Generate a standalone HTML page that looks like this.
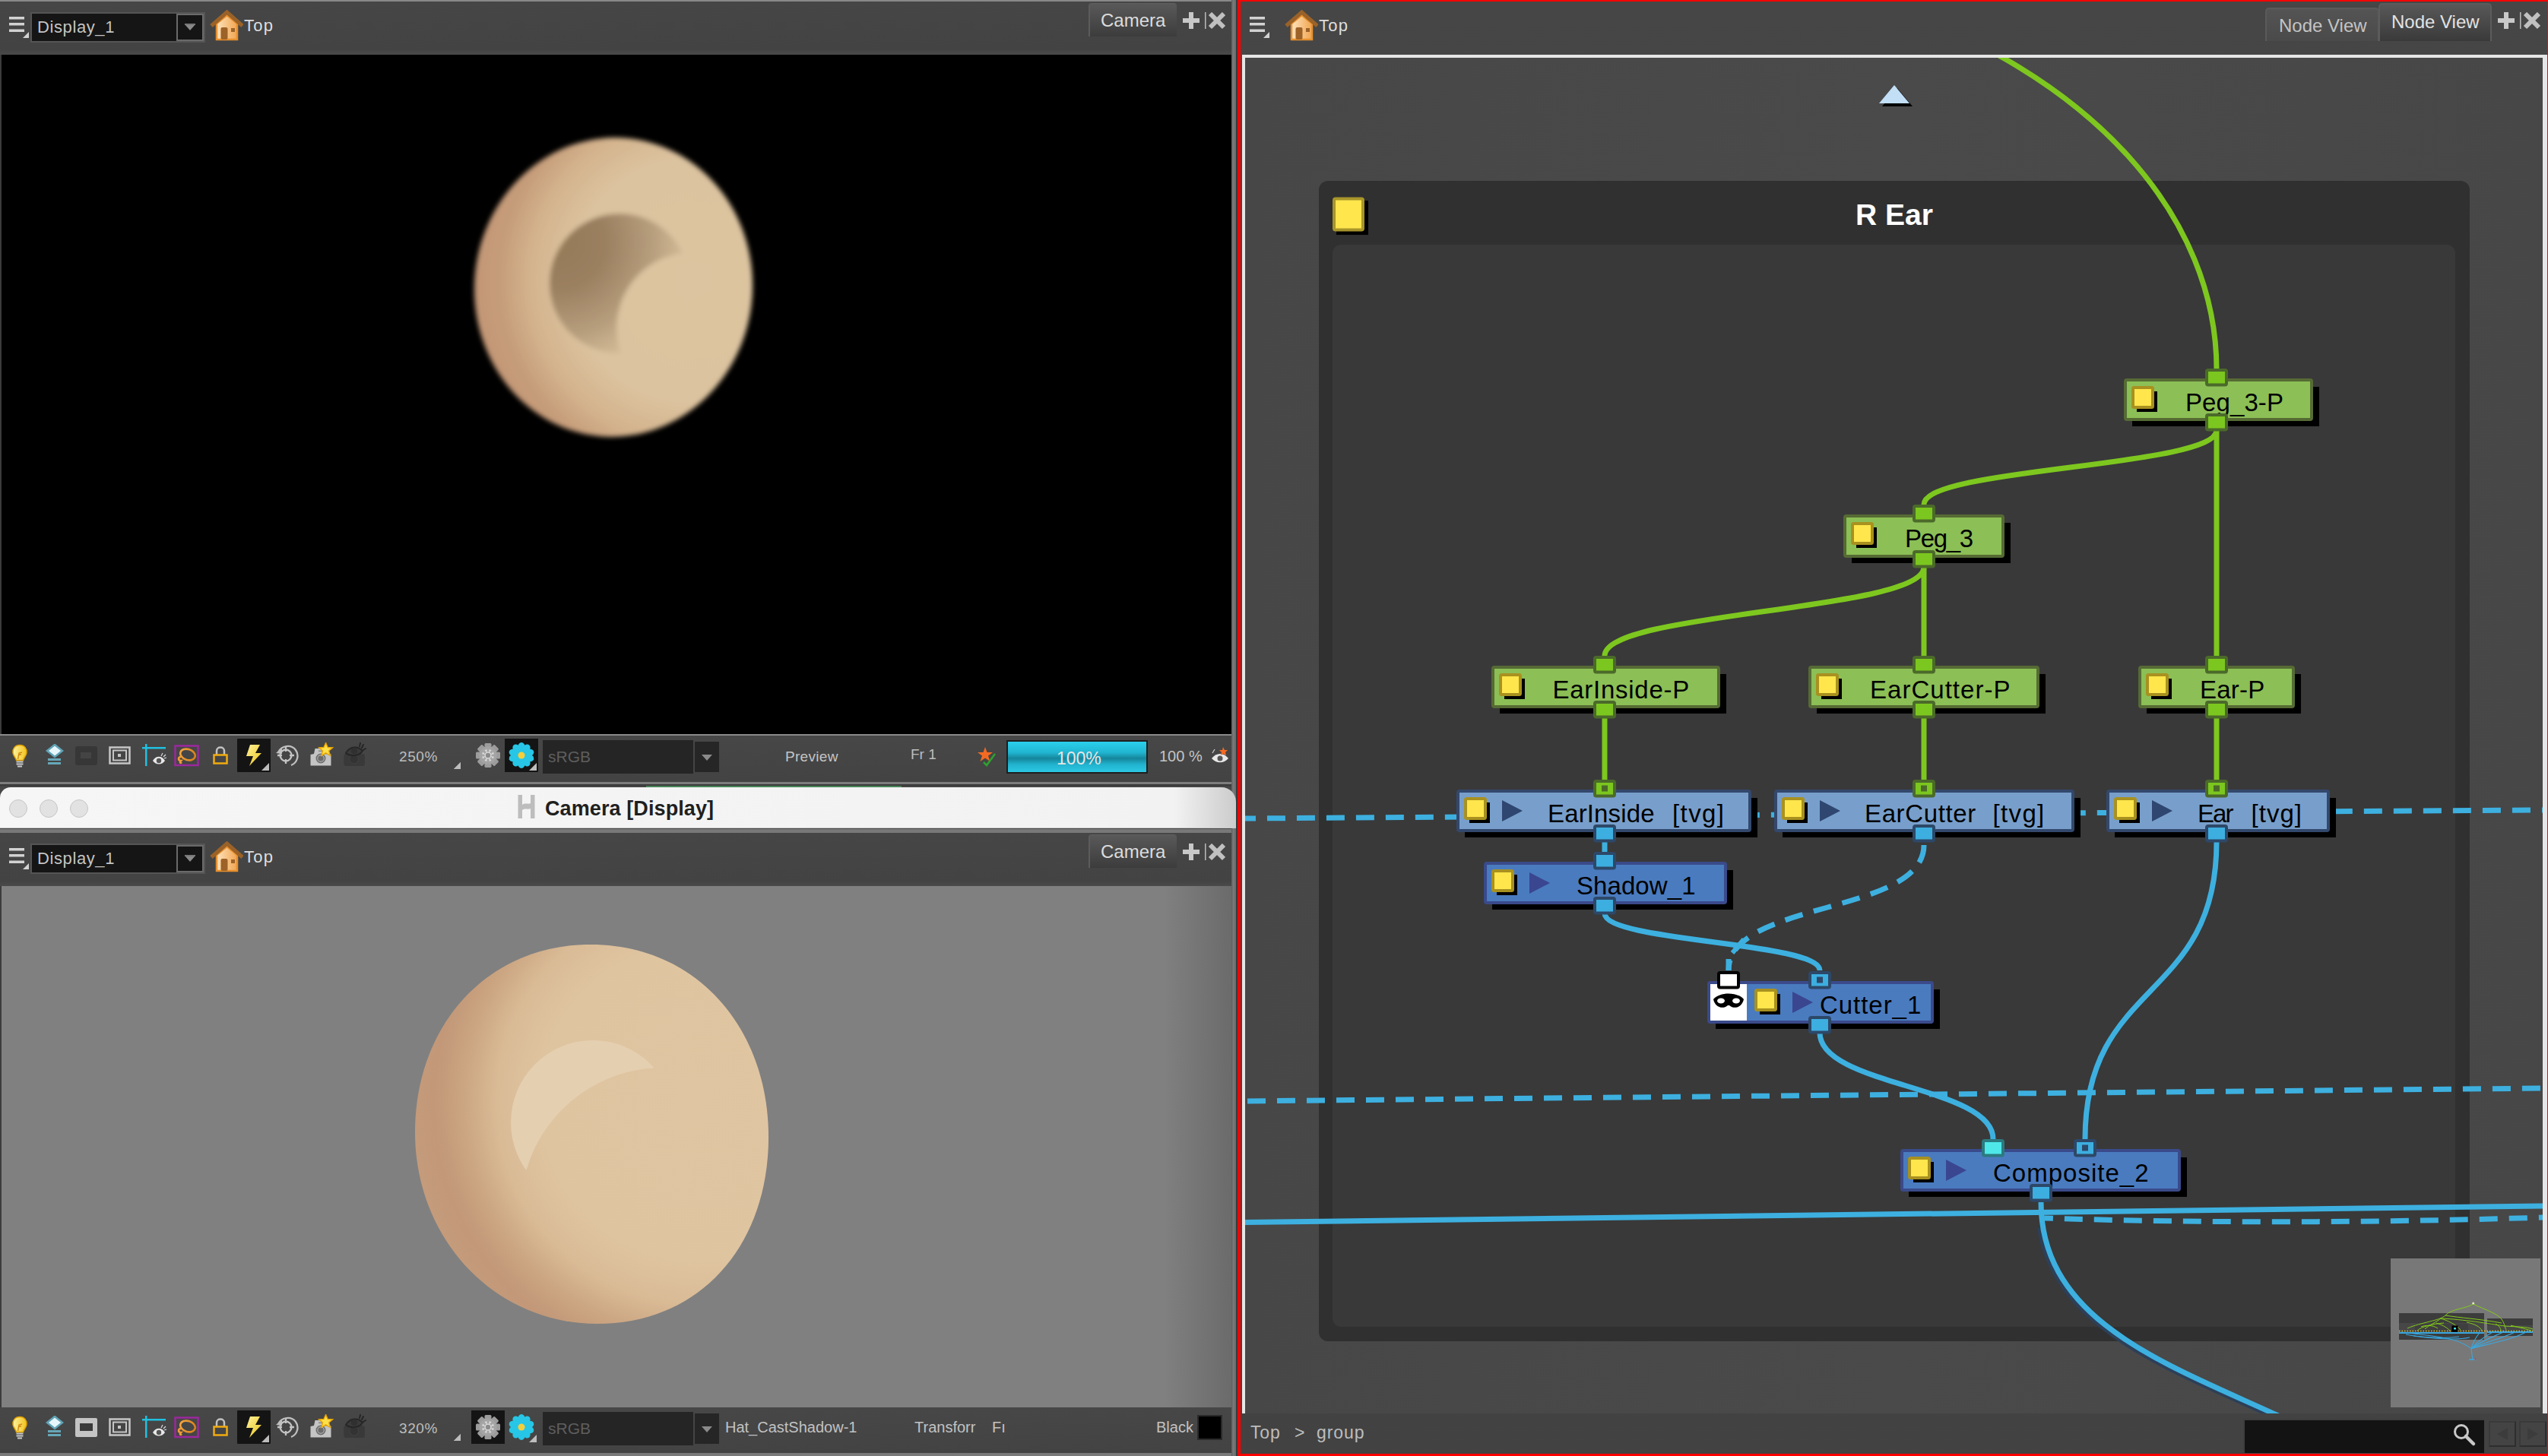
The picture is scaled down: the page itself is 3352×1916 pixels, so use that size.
<!DOCTYPE html>
<html><head><meta charset="utf-8"><title>Harmony</title>
<style>
html,body{margin:0;padding:0;width:3352px;height:1916px;overflow:hidden;background:#474747;font-family:"Liberation Sans",sans-serif;}
.a{position:absolute;}
.tb{background:linear-gradient(#4a4a4a,#454545);}
.t{position:absolute;white-space:nowrap;line-height:1;}
</style></head><body>

<div class="a" style="left:0px;top:0px;width:1620px;height:72px;background:linear-gradient(#464646,#434343 90%,#4a4a4a);border-top:2px solid #888;box-sizing:border-box"></div>
<svg class="a" style="left:12px;top:22px;" width="27" height="29" viewBox="0 0 27 29"><rect x="0" y="0" width="20" height="3.5" fill="#d2d2d2"/><rect x="0" y="8" width="20" height="3.5" fill="#d2d2d2"/><rect x="0" y="16.5" width="20" height="3.5" fill="#d2d2d2"/><path d="M26 20 L26 28 L18 28 Z" fill="#d2d2d2"/></svg>
<div class="a" style="left:40px;top:16px;width:230px;height:40px;background:#151515;border:2px solid #555;box-sizing:border-box"></div>
<div class="a" style="left:232px;top:18px;width:36px;height:36px;background:#151515;border:2px solid #6a6a6a;box-sizing:border-box"></div>
<svg class="a" style="left:243px;top:31px;" width="14" height="10" viewBox="0 0 14 10"><path d="M0 1 L14 1 L7 9 Z" fill="#8a8a8a"/><rect x="0" y="0" width="14" height="2" fill="#777"/></svg>
<div class="t" style="left:49px;top:25px;font-size:22px;color:#c4c4c4;font-weight:normal;letter-spacing:0.6px">Display_1</div>
<svg class="a" style="left:276px;top:13px;" width="44" height="41" viewBox="0 0 44 41"><defs><linearGradient id="hg276_13" x1="0" x2="1"><stop offset="0" stop-color="#fde3bd"/><stop offset="1" stop-color="#f2a550"/></linearGradient></defs>
<path d="M9 18 L9 39 L36 39 L36 18 L22.5 7 Z" fill="url(#hg276_13)" stroke="#e7902e" stroke-width="2.5"/>
<path d="M2 21 L22.5 3 L43 21" fill="none" stroke="#9a6228" stroke-width="5" stroke-linejoin="miter"/>
<rect x="14.5" y="23" width="9" height="16" rx="2" fill="#9c6228"/>
<rect x="28" y="24" width="5" height="5" fill="#9c6228"/></svg>
<div class="t" style="left:321px;top:23px;font-size:22px;color:#dedede;font-weight:normal;letter-spacing:1.2px">Top</div>
<div class="a" style="left:1432px;top:4px;width:116px;height:44px;background:linear-gradient(#595959,#3c3c3c);border-left:2px solid #5c5c5c;border-top:1px solid #5e5e5e;border-radius:4px 4px 0 0;box-sizing:border-box"></div>
<div class="t" style="left:1448px;top:15px;font-size:24px;color:#dcdcdc;font-weight:normal;">Camera</div>
<svg class="a" style="left:1556px;top:16px;" width="56" height="24" viewBox="0 0 56 24"><rect x="0" y="8" width="22" height="6" fill="#c8c8c8"/><rect x="8" y="0" width="6" height="22" fill="#c8c8c8"/>
<rect x="29" y="-1" width="1.5" height="23" fill="#bbbbbb"/>
<path d="M36 2 L54 20 M54 2 L36 20" stroke="#c0c0c0" stroke-width="6"/></svg>
<div class="a" style="left:0px;top:72px;width:2px;height:894px;background:#3c3c3c"></div>
<div class="a" style="left:2px;top:72px;width:1618px;height:894px;background:#000"></div>
<div class="a" style="left:0px;top:966px;width:1620px;height:63px;background:linear-gradient(#474747,#434343);border-top:2px solid #8a8a8a;box-sizing:border-box"></div>
<div class="a" style="left:0px;top:1029px;width:1620px;height:7px;background:linear-gradient(#7d7d7d 0,#7d7d7d 45%,#3a3a3a 45%,#3a3a3a 72%,#444 72%)"></div>
<div class="a" style="left:850px;top:1034px;width:336px;height:2px;background:#4a8458"></div>
<div class="a" style="left:1620px;top:0px;width:6px;height:1916px;background:linear-gradient(90deg,#5e5e5e,#7a7a7a 40%,#6a6a6a)"></div>
<div class="a" style="left:1626px;top:0px;width:2px;height:1916px;background:#3a3a3a"></div>
<div class="a" style="left:0px;top:1036px;width:1626px;height:54px;background:linear-gradient(90deg,#f6f6f6 0,#f2f2f2 95%,#cccccc 100%);border-radius:14px 19px 0 0;border-bottom:1px solid #c9c9c9;box-sizing:border-box"></div>
<div class="a" style="left:12px;top:1052px;width:24px;height:24px;background:#e2e2e2;border:1px solid #c6c6c6;border-radius:50%;box-sizing:border-box"></div>
<div class="a" style="left:52px;top:1052px;width:24px;height:24px;background:#e2e2e2;border:1px solid #c6c6c6;border-radius:50%;box-sizing:border-box"></div>
<div class="a" style="left:92px;top:1052px;width:24px;height:24px;background:#e2e2e2;border:1px solid #c6c6c6;border-radius:50%;box-sizing:border-box"></div>
<svg class="a" style="left:679px;top:1045px;" width="27" height="33" viewBox="0 0 27 33"><path d="M2.5 1 L8 1 L8 14 C12 11 16 14 19 12 L19 1 L24.5 1 L24.5 32 L19 32 L19 19 C15 21 12 18 8 21 L8 32 L2.5 32 Z" fill="#bdbdbd"/></svg>
<div class="t" style="left:717px;top:1051px;font-size:27px;color:#1f1f1f;font-weight:bold;letter-spacing:0.1px">Camera [Display]</div>
<div class="a" style="left:0px;top:1091px;width:1620px;height:5px;background:#787878"></div>
<div class="a" style="left:0px;top:1096px;width:1620px;height:70px;background:linear-gradient(#464646,#434343 90%,#4a4a4a)"></div>
<svg class="a" style="left:12px;top:1116px;" width="27" height="29" viewBox="0 0 27 29"><rect x="0" y="0" width="20" height="3.5" fill="#d2d2d2"/><rect x="0" y="8" width="20" height="3.5" fill="#d2d2d2"/><rect x="0" y="16.5" width="20" height="3.5" fill="#d2d2d2"/><path d="M26 20 L26 28 L18 28 Z" fill="#d2d2d2"/></svg>
<div class="a" style="left:40px;top:1110px;width:230px;height:40px;background:#151515;border:2px solid #555;box-sizing:border-box"></div>
<div class="a" style="left:232px;top:1112px;width:36px;height:36px;background:#151515;border:2px solid #6a6a6a;box-sizing:border-box"></div>
<svg class="a" style="left:243px;top:1125px;" width="14" height="10" viewBox="0 0 14 10"><path d="M0 1 L14 1 L7 9 Z" fill="#8a8a8a"/><rect x="0" y="0" width="14" height="2" fill="#777"/></svg>
<div class="t" style="left:49px;top:1119px;font-size:22px;color:#c4c4c4;font-weight:normal;letter-spacing:0.6px">Display_1</div>
<svg class="a" style="left:276px;top:1107px;" width="44" height="41" viewBox="0 0 44 41"><defs><linearGradient id="hg276_1107" x1="0" x2="1"><stop offset="0" stop-color="#fde3bd"/><stop offset="1" stop-color="#f2a550"/></linearGradient></defs>
<path d="M9 18 L9 39 L36 39 L36 18 L22.5 7 Z" fill="url(#hg276_1107)" stroke="#e7902e" stroke-width="2.5"/>
<path d="M2 21 L22.5 3 L43 21" fill="none" stroke="#9a6228" stroke-width="5" stroke-linejoin="miter"/>
<rect x="14.5" y="23" width="9" height="16" rx="2" fill="#9c6228"/>
<rect x="28" y="24" width="5" height="5" fill="#9c6228"/></svg>
<div class="t" style="left:321px;top:1117px;font-size:22px;color:#dedede;font-weight:normal;letter-spacing:1.2px">Top</div>
<div class="a" style="left:1432px;top:1098px;width:116px;height:44px;background:linear-gradient(#595959,#3c3c3c);border-left:2px solid #5c5c5c;border-top:1px solid #5e5e5e;border-radius:4px 4px 0 0;box-sizing:border-box"></div>
<div class="t" style="left:1448px;top:1109px;font-size:24px;color:#dcdcdc;font-weight:normal;">Camera</div>
<svg class="a" style="left:1556px;top:1110px;" width="56" height="24" viewBox="0 0 56 24"><rect x="0" y="8" width="22" height="6" fill="#c8c8c8"/><rect x="8" y="0" width="6" height="22" fill="#c8c8c8"/>
<rect x="29" y="-1" width="1.5" height="23" fill="#bbbbbb"/>
<path d="M36 2 L54 20 M54 2 L36 20" stroke="#c0c0c0" stroke-width="6"/></svg>
<div class="a" style="left:0px;top:1166px;width:2px;height:686px;background:#3c3c3c"></div>
<div class="a" style="left:2px;top:1166px;width:1618px;height:686px;background:linear-gradient(90deg,#808080 0,#808080 94.5%,#6b6b6b 100%)"></div>
<div class="a" style="left:0px;top:1852px;width:1620px;height:60px;background:linear-gradient(#474747,#434343)"></div>
<div class="a" style="left:0px;top:1912px;width:1620px;height:4px;background:#7a7a7a"></div>
<svg class="a" style="left:15px;top:979px;" width="22" height="34" viewBox="0 0 22 34"><defs><linearGradient id="bulb994" x1="0" x2="1"><stop offset="0" stop-color="#fff3a0"/><stop offset="1" stop-color="#f1c21b"/></linearGradient></defs>
<path d="M11 1.5 C4.5 1.5 1.5 6.5 2 11.5 C2.5 16 6 18 6.5 21.5 L15.5 21.5 C16 18 19.5 16 20 11.5 C20.5 6.5 17.5 1.5 11 1.5 Z" fill="url(#bulb994)" stroke="#e0a000" stroke-width="1.5"/>
<path d="M8.5 20 L10 12 L14 11 M10 14.5 L13 13.5" stroke="#d08a10" stroke-width="1.4" fill="none"/>
<path d="M6.5 23.5 L15.5 23.5 M6.5 26.5 L15.5 26.5 M8 29.5 L14 29.5" stroke="#c9c9c9" stroke-width="2"/></svg>
<svg class="a" style="left:60px;top:979px;" width="24" height="29" viewBox="0 0 24 29"><path d="M12 1 L22 9 L12 17 L2 9 Z" fill="#e6f6fb" stroke="#5fa3b6" stroke-width="2.5"/>
<rect x="3" y="19" width="17" height="3" fill="#66a7b8"/><rect x="3" y="24" width="17" height="3" fill="#66a7b8"/></svg>
<svg class="a" style="left:99px;top:982px;" width="30" height="25" viewBox="0 0 30 25"><rect x="0" y="0" width="29" height="25" rx="3" fill="#373737"/><rect x="7" y="8" width="14" height="8" fill="#444"/></svg>
<svg class="a" style="left:143px;top:982px;" width="30" height="25" viewBox="0 0 30 25"><rect x="1.5" y="1.5" width="26" height="21" fill="none" stroke="#c6c6c6" stroke-width="2.5"/><rect x="6" y="5.5" width="17" height="13" fill="none" stroke="#c6c6c6" stroke-width="2"/><rect x="12" y="10" width="4" height="4" fill="#c6c6c6"/></svg>
<svg class="a" style="left:186px;top:978px;" width="34" height="32" viewBox="0 0 34 32"><rect x="5" y="1" width="2.5" height="29" fill="#20c0e0"/><rect x="1" y="5" width="31" height="2.5" fill="#20c0e0"/>
<path d="M15 23 C19 16 27 16 31 23 C27 29 19 29 15 23 Z" fill="#e8e8e8"/><circle cx="23" cy="23" r="3.2" fill="#555"/>
<path d="M26 17 L28 13 M29 18 L32 15 M30 20 L33 19" stroke="#ddd" stroke-width="1.2"/></svg>
<svg class="a" style="left:229px;top:980px;" width="34" height="29" viewBox="0 0 34 29"><rect x="1.5" y="1.5" width="30" height="25.5" fill="none" stroke="#9c289e" stroke-width="2.5"/>
<defs><linearGradient id="las994" x1="0" x2="1"><stop offset="0" stop-color="#f3a43e"/><stop offset="1" stop-color="#d7801c"/></linearGradient></defs>
<ellipse cx="18" cy="13" rx="10" ry="7" fill="none" stroke="url(#las994)" stroke-width="2.6" transform="rotate(18 18 13)"/>
<path d="M9 16 C5 16 5 21 9 21 C7 23 8 25 10 23" fill="none" stroke="#ef9c36" stroke-width="2.6"/></svg>
<svg class="a" style="left:279px;top:982px;" width="22" height="25" viewBox="0 0 22 25"><path d="M6 11 L6 6 C6 0 16 0 16 6 L16 11" fill="none" stroke="#c2c2c2" stroke-width="2.5"/><rect x="2.5" y="11.5" width="17" height="11" fill="none" stroke="#f0ab10" stroke-width="2.5"/></svg>
<svg class="a" style="left:312px;top:972px;" width="44" height="44" viewBox="0 0 44 44"><rect x="0" y="0" width="44" height="44" rx="1" fill="#141414"/>
<defs><linearGradient id="bolt994" x1="0" x2="1" y1="0" y2="1"><stop offset="0" stop-color="#fff29a"/><stop offset="1" stop-color="#e8c21a"/></linearGradient></defs>
<path d="M17 8 L30 8 L24 19 L32 19 L16 36 L21 23 L12 23 Z" fill="url(#bolt994)"/>
<path d="M42 32 L42 42 L32 42 Z" fill="#bcbcbc"/></svg>
<svg class="a" style="left:361px;top:979px;" width="32" height="30" viewBox="0 0 32 30"><path d="M5 11 C9 2 22 0 28 8 C33 15 30 25 22 28" fill="none" stroke="#bfbfbf" stroke-width="2.3"/>
<path d="M2 12 L10 5 L10 13 Z" fill="#bfbfbf"/>
<circle cx="15" cy="15" r="7.5" fill="none" stroke="#c4c4c4" stroke-width="2.3"/>
<path d="M15 4 L15 10 M15 20 L15 26 M4 15 L10 15 M20 15 L26 15" stroke="#c4c4c4" stroke-width="2.3"/></svg>
<svg class="a" style="left:407px;top:977px;" width="34" height="32" viewBox="0 0 34 32"><path d="M1.5 16 L6 15 L7.5 8 L18 8 L18.5 15 L28.5 15.5 L28.5 30.5 L1.5 30.5 Z" fill="#c4c4c4"/>
<rect x="12" y="10.5" width="6" height="1.6" fill="#8a8a8a"/>
<circle cx="15" cy="21" r="5.6" fill="#c4c4c4" stroke="#6e6e6e" stroke-width="1.8"/><circle cx="15" cy="21" r="3.8" fill="#6b6b6b"/>
<path d="M21.6 0.5 L24.2 6.5 L30.6 6.9 L25.7 11 L27.3 17.3 L21.6 13.9 L15.9 17.3 L17.5 11 L12.6 6.9 L19 6.5 Z" fill="#ffe04a" stroke="#e8a400" stroke-width="1.4"/></svg>
<svg class="a" style="left:451px;top:977px;" width="32" height="33" viewBox="0 0 32 33"><rect x="1.3" y="15" width="27.6" height="16" rx="3" fill="#393939"/>
<circle cx="14.7" cy="22" r="6" fill="#333" stroke="#3e3e3e" stroke-width="1.5"/>
<path d="M4 14 C9 5 20 4 26 11 C22 18 10 19 4 14 Z" fill="#3a3a3a" stroke="#262626" stroke-width="2"/>
<circle cx="15" cy="11" r="4.3" fill="#303030"/>
<path d="M22 5 L23 1 M25 7 L27 3 M27 10 L30 8" stroke="#262626" stroke-width="2" stroke-linecap="round"/></svg>
<div class="t" style="left:525px;top:986px;font-size:19px;color:#bdbdbd;font-weight:normal;letter-spacing:0.6px">250%</div>
<svg class="a" style="left:597px;top:1003px;" width="9" height="9" viewBox="0 0 9 9"><path d="M9 0 L9 9 L0 9 Z" fill="#bdbdbd"/></svg>
<svg class="a" style="left:624px;top:976px;" width="36" height="36" viewBox="0 0 36 36"><g transform="translate(18 18)"><rect x="-4.5" y="-16" width="9" height="9" rx="1.5" fill="#9c9c9c" transform="rotate(0)"/><rect x="-4.5" y="-16" width="9" height="9" rx="1.5" fill="#9c9c9c" transform="rotate(45)"/><rect x="-4.5" y="-16" width="9" height="9" rx="1.5" fill="#9c9c9c" transform="rotate(90)"/><rect x="-4.5" y="-16" width="9" height="9" rx="1.5" fill="#9c9c9c" transform="rotate(135)"/><rect x="-4.5" y="-16" width="9" height="9" rx="1.5" fill="#9c9c9c" transform="rotate(180)"/><rect x="-4.5" y="-16" width="9" height="9" rx="1.5" fill="#9c9c9c" transform="rotate(225)"/><rect x="-4.5" y="-16" width="9" height="9" rx="1.5" fill="#9c9c9c" transform="rotate(270)"/><rect x="-4.5" y="-16" width="9" height="9" rx="1.5" fill="#9c9c9c" transform="rotate(315)"/><circle r="11.5" fill="#a4a4a4"/><circle r="8" fill="#dcdcdc"/><rect x="-1.5" y="-8.5" width="3" height="4" fill="#a4a4a4" transform="rotate(0)"/><rect x="-1.5" y="-8.5" width="3" height="4" fill="#a4a4a4" transform="rotate(45)"/><rect x="-1.5" y="-8.5" width="3" height="4" fill="#a4a4a4" transform="rotate(90)"/><rect x="-1.5" y="-8.5" width="3" height="4" fill="#a4a4a4" transform="rotate(135)"/><rect x="-1.5" y="-8.5" width="3" height="4" fill="#a4a4a4" transform="rotate(180)"/><rect x="-1.5" y="-8.5" width="3" height="4" fill="#a4a4a4" transform="rotate(225)"/><rect x="-1.5" y="-8.5" width="3" height="4" fill="#a4a4a4" transform="rotate(270)"/><rect x="-1.5" y="-8.5" width="3" height="4" fill="#a4a4a4" transform="rotate(315)"/><circle r="3.2" fill="#8c8c8c"/></g></svg>
<div class="a" style="left:664px;top:972px;width:44px;height:44px;background:#141414"></div>
<svg class="a" style="left:668px;top:976px;" width="36" height="36" viewBox="0 0 36 36"><g transform="translate(18 18)"><ellipse cx="0" cy="-10" rx="5" ry="7" fill="#27c6e6" transform="rotate(0)"/><ellipse cx="0" cy="-10" rx="5" ry="7" fill="#27c6e6" transform="rotate(36)"/><ellipse cx="0" cy="-10" rx="5" ry="7" fill="#27c6e6" transform="rotate(72)"/><ellipse cx="0" cy="-10" rx="5" ry="7" fill="#27c6e6" transform="rotate(108)"/><ellipse cx="0" cy="-10" rx="5" ry="7" fill="#27c6e6" transform="rotate(144)"/><ellipse cx="0" cy="-10" rx="5" ry="7" fill="#27c6e6" transform="rotate(180)"/><ellipse cx="0" cy="-10" rx="5" ry="7" fill="#27c6e6" transform="rotate(216)"/><ellipse cx="0" cy="-10" rx="5" ry="7" fill="#27c6e6" transform="rotate(252)"/><ellipse cx="0" cy="-10" rx="5" ry="7" fill="#27c6e6" transform="rotate(288)"/><ellipse cx="0" cy="-10" rx="5" ry="7" fill="#27c6e6" transform="rotate(324)"/><circle r="7" fill="#27c6e6"/><circle r="4.5" fill="#f5cf3a"/></g></svg>
<svg class="a" style="left:696px;top:1004px;" width="10" height="10" viewBox="0 0 10 10"><path d="M10 0 L10 10 L0 10 Z" fill="#bdbdbd"/></svg>
<svg class="a" style="left:597px;top:1003px;" width="9" height="9" viewBox="0 0 9 9"><path d="M9 0 L9 9 L0 9 Z" fill="#bdbdbd"/></svg>
<div class="a" style="left:714px;top:974px;width:198px;height:44px;background:#252525"></div>
<div class="a" style="left:914px;top:976px;width:32px;height:40px;background:#262626"></div>
<svg class="a" style="left:923px;top:992px;" width="14" height="10" viewBox="0 0 14 10"><path d="M0 1 L14 1 L7 9 Z" fill="#8a8a8a"/></svg>
<div class="t" style="left:721px;top:985px;font-size:21px;color:#5e5e5e;font-weight:normal;">sRGB</div>
<div class="t" style="left:1033px;top:986px;font-size:19px;color:#c4c4c4;font-weight:normal;letter-spacing:0.3px">Preview</div>
<div class="t" style="left:1198px;top:983px;font-size:19px;color:#bdbdbd;font-weight:normal;">Fr 1</div>
<svg class="a" style="left:1285px;top:982px;" width="28" height="28" viewBox="0 0 28 28"><path d="M11 1 L13.5 8 L21 8 L15 12.5 L17.5 20 L11 15.5 L4.5 20 L7 12.5 L1 8 L8.5 8 Z" fill="#f46a22"/><path d="M9 21 L13 25 L24 10" fill="none" stroke="#2ea22e" stroke-width="2.5"/></svg>
<div class="a" style="left:1324px;top:974px;width:186px;height:44px;background:linear-gradient(#2ad0ec 0%,#21b6d2 35%,#15869c 55%,#21b3cf 75%,#2cc8e4 100%);border:2px solid #1f1f1f;box-sizing:border-box"></div>
<div class="t" style="left:1390px;top:987px;font-size:23px;color:#e6e6e6;font-weight:normal;">100%</div>
<div class="t" style="left:1525px;top:985px;font-size:20px;color:#c4c4c4;font-weight:normal;">100 %</div>
<svg class="a" style="left:1592px;top:981px;" width="26" height="26" viewBox="0 0 26 26"><path d="M2 17 C8 9 18 9 24 17 C18 24 8 24 2 17 Z" fill="#e8e8e8"/><circle cx="13" cy="17" r="3.5" fill="#555"/><path d="M17 2 L19 6 L23 6 L20 9 L21 13 L17 11 L14 13 L15 9 L12 6 L16 6 Z" fill="#f46a22"/><path d="M3 10 L6 5" stroke="#ccc" stroke-width="1.3"/></svg>
<svg class="a" style="left:15px;top:1863px;" width="22" height="34" viewBox="0 0 22 34"><defs><linearGradient id="bulb1878" x1="0" x2="1"><stop offset="0" stop-color="#fff3a0"/><stop offset="1" stop-color="#f1c21b"/></linearGradient></defs>
<path d="M11 1.5 C4.5 1.5 1.5 6.5 2 11.5 C2.5 16 6 18 6.5 21.5 L15.5 21.5 C16 18 19.5 16 20 11.5 C20.5 6.5 17.5 1.5 11 1.5 Z" fill="url(#bulb1878)" stroke="#e0a000" stroke-width="1.5"/>
<path d="M8.5 20 L10 12 L14 11 M10 14.5 L13 13.5" stroke="#d08a10" stroke-width="1.4" fill="none"/>
<path d="M6.5 23.5 L15.5 23.5 M6.5 26.5 L15.5 26.5 M8 29.5 L14 29.5" stroke="#c9c9c9" stroke-width="2"/></svg>
<svg class="a" style="left:60px;top:1863px;" width="24" height="29" viewBox="0 0 24 29"><path d="M12 1 L22 9 L12 17 L2 9 Z" fill="#e6f6fb" stroke="#5fa3b6" stroke-width="2.5"/>
<rect x="3" y="19" width="17" height="3" fill="#66a7b8"/><rect x="3" y="24" width="17" height="3" fill="#66a7b8"/></svg>
<svg class="a" style="left:99px;top:1866px;" width="30" height="25" viewBox="0 0 30 25"><rect x="0" y="0" width="29" height="25" rx="2" fill="#c4c4c4"/><rect x="6" y="7" width="17" height="10" fill="#3a3a3a"/></svg>
<svg class="a" style="left:143px;top:1866px;" width="30" height="25" viewBox="0 0 30 25"><rect x="1.5" y="1.5" width="26" height="21" fill="none" stroke="#c6c6c6" stroke-width="2.5"/><rect x="6" y="5.5" width="17" height="13" fill="none" stroke="#c6c6c6" stroke-width="2"/><rect x="12" y="10" width="4" height="4" fill="#c6c6c6"/></svg>
<svg class="a" style="left:186px;top:1862px;" width="34" height="32" viewBox="0 0 34 32"><rect x="5" y="1" width="2.5" height="29" fill="#20c0e0"/><rect x="1" y="5" width="31" height="2.5" fill="#20c0e0"/>
<path d="M15 23 C19 16 27 16 31 23 C27 29 19 29 15 23 Z" fill="#e8e8e8"/><circle cx="23" cy="23" r="3.2" fill="#555"/>
<path d="M26 17 L28 13 M29 18 L32 15 M30 20 L33 19" stroke="#ddd" stroke-width="1.2"/></svg>
<svg class="a" style="left:229px;top:1864px;" width="34" height="29" viewBox="0 0 34 29"><rect x="1.5" y="1.5" width="30" height="25.5" fill="none" stroke="#9c289e" stroke-width="2.5"/>
<defs><linearGradient id="las1878" x1="0" x2="1"><stop offset="0" stop-color="#f3a43e"/><stop offset="1" stop-color="#d7801c"/></linearGradient></defs>
<ellipse cx="18" cy="13" rx="10" ry="7" fill="none" stroke="url(#las1878)" stroke-width="2.6" transform="rotate(18 18 13)"/>
<path d="M9 16 C5 16 5 21 9 21 C7 23 8 25 10 23" fill="none" stroke="#ef9c36" stroke-width="2.6"/></svg>
<svg class="a" style="left:279px;top:1866px;" width="22" height="25" viewBox="0 0 22 25"><path d="M6 11 L6 6 C6 0 16 0 16 6 L16 11" fill="none" stroke="#c2c2c2" stroke-width="2.5"/><rect x="2.5" y="11.5" width="17" height="11" fill="none" stroke="#f0ab10" stroke-width="2.5"/></svg>
<svg class="a" style="left:312px;top:1856px;" width="44" height="44" viewBox="0 0 44 44"><rect x="0" y="0" width="44" height="44" rx="1" fill="#141414"/>
<defs><linearGradient id="bolt1878" x1="0" x2="1" y1="0" y2="1"><stop offset="0" stop-color="#fff29a"/><stop offset="1" stop-color="#e8c21a"/></linearGradient></defs>
<path d="M17 8 L30 8 L24 19 L32 19 L16 36 L21 23 L12 23 Z" fill="url(#bolt1878)"/>
<path d="M42 32 L42 42 L32 42 Z" fill="#bcbcbc"/></svg>
<svg class="a" style="left:361px;top:1863px;" width="32" height="30" viewBox="0 0 32 30"><path d="M5 11 C9 2 22 0 28 8 C33 15 30 25 22 28" fill="none" stroke="#bfbfbf" stroke-width="2.3"/>
<path d="M2 12 L10 5 L10 13 Z" fill="#bfbfbf"/>
<circle cx="15" cy="15" r="7.5" fill="none" stroke="#c4c4c4" stroke-width="2.3"/>
<path d="M15 4 L15 10 M15 20 L15 26 M4 15 L10 15 M20 15 L26 15" stroke="#c4c4c4" stroke-width="2.3"/></svg>
<svg class="a" style="left:407px;top:1861px;" width="34" height="32" viewBox="0 0 34 32"><path d="M1.5 16 L6 15 L7.5 8 L18 8 L18.5 15 L28.5 15.5 L28.5 30.5 L1.5 30.5 Z" fill="#c4c4c4"/>
<rect x="12" y="10.5" width="6" height="1.6" fill="#8a8a8a"/>
<circle cx="15" cy="21" r="5.6" fill="#c4c4c4" stroke="#6e6e6e" stroke-width="1.8"/><circle cx="15" cy="21" r="3.8" fill="#6b6b6b"/>
<path d="M21.6 0.5 L24.2 6.5 L30.6 6.9 L25.7 11 L27.3 17.3 L21.6 13.9 L15.9 17.3 L17.5 11 L12.6 6.9 L19 6.5 Z" fill="#ffe04a" stroke="#e8a400" stroke-width="1.4"/></svg>
<svg class="a" style="left:451px;top:1861px;" width="32" height="33" viewBox="0 0 32 33"><rect x="1.3" y="15" width="27.6" height="16" rx="3" fill="#393939"/>
<circle cx="14.7" cy="22" r="6" fill="#333" stroke="#3e3e3e" stroke-width="1.5"/>
<path d="M4 14 C9 5 20 4 26 11 C22 18 10 19 4 14 Z" fill="#3a3a3a" stroke="#262626" stroke-width="2"/>
<circle cx="15" cy="11" r="4.3" fill="#303030"/>
<path d="M22 5 L23 1 M25 7 L27 3 M27 10 L30 8" stroke="#262626" stroke-width="2" stroke-linecap="round"/></svg>
<div class="t" style="left:525px;top:1870px;font-size:19px;color:#bdbdbd;font-weight:normal;letter-spacing:0.6px">320%</div>
<svg class="a" style="left:597px;top:1887px;" width="9" height="9" viewBox="0 0 9 9"><path d="M9 0 L9 9 L0 9 Z" fill="#bdbdbd"/></svg>
<div class="a" style="left:620px;top:1856px;width:44px;height:44px;background:#141414"></div>
<svg class="a" style="left:624px;top:1860px;" width="36" height="36" viewBox="0 0 36 36"><g transform="translate(18 18)"><rect x="-4.5" y="-16" width="9" height="9" rx="1.5" fill="#9c9c9c" transform="rotate(0)"/><rect x="-4.5" y="-16" width="9" height="9" rx="1.5" fill="#9c9c9c" transform="rotate(45)"/><rect x="-4.5" y="-16" width="9" height="9" rx="1.5" fill="#9c9c9c" transform="rotate(90)"/><rect x="-4.5" y="-16" width="9" height="9" rx="1.5" fill="#9c9c9c" transform="rotate(135)"/><rect x="-4.5" y="-16" width="9" height="9" rx="1.5" fill="#9c9c9c" transform="rotate(180)"/><rect x="-4.5" y="-16" width="9" height="9" rx="1.5" fill="#9c9c9c" transform="rotate(225)"/><rect x="-4.5" y="-16" width="9" height="9" rx="1.5" fill="#9c9c9c" transform="rotate(270)"/><rect x="-4.5" y="-16" width="9" height="9" rx="1.5" fill="#9c9c9c" transform="rotate(315)"/><circle r="11.5" fill="#a4a4a4"/><circle r="8" fill="#dcdcdc"/><rect x="-1.5" y="-8.5" width="3" height="4" fill="#a4a4a4" transform="rotate(0)"/><rect x="-1.5" y="-8.5" width="3" height="4" fill="#a4a4a4" transform="rotate(45)"/><rect x="-1.5" y="-8.5" width="3" height="4" fill="#a4a4a4" transform="rotate(90)"/><rect x="-1.5" y="-8.5" width="3" height="4" fill="#a4a4a4" transform="rotate(135)"/><rect x="-1.5" y="-8.5" width="3" height="4" fill="#a4a4a4" transform="rotate(180)"/><rect x="-1.5" y="-8.5" width="3" height="4" fill="#a4a4a4" transform="rotate(225)"/><rect x="-1.5" y="-8.5" width="3" height="4" fill="#a4a4a4" transform="rotate(270)"/><rect x="-1.5" y="-8.5" width="3" height="4" fill="#a4a4a4" transform="rotate(315)"/><circle r="3.2" fill="#8c8c8c"/></g></svg>
<svg class="a" style="left:668px;top:1860px;" width="36" height="36" viewBox="0 0 36 36"><g transform="translate(18 18)"><ellipse cx="0" cy="-10" rx="5" ry="7" fill="#27c6e6" transform="rotate(0)"/><ellipse cx="0" cy="-10" rx="5" ry="7" fill="#27c6e6" transform="rotate(36)"/><ellipse cx="0" cy="-10" rx="5" ry="7" fill="#27c6e6" transform="rotate(72)"/><ellipse cx="0" cy="-10" rx="5" ry="7" fill="#27c6e6" transform="rotate(108)"/><ellipse cx="0" cy="-10" rx="5" ry="7" fill="#27c6e6" transform="rotate(144)"/><ellipse cx="0" cy="-10" rx="5" ry="7" fill="#27c6e6" transform="rotate(180)"/><ellipse cx="0" cy="-10" rx="5" ry="7" fill="#27c6e6" transform="rotate(216)"/><ellipse cx="0" cy="-10" rx="5" ry="7" fill="#27c6e6" transform="rotate(252)"/><ellipse cx="0" cy="-10" rx="5" ry="7" fill="#27c6e6" transform="rotate(288)"/><ellipse cx="0" cy="-10" rx="5" ry="7" fill="#27c6e6" transform="rotate(324)"/><circle r="7" fill="#27c6e6"/><circle r="4.5" fill="#f5cf3a"/></g></svg>
<svg class="a" style="left:696px;top:1888px;" width="10" height="10" viewBox="0 0 10 10"><path d="M10 0 L10 10 L0 10 Z" fill="#bdbdbd"/></svg>
<svg class="a" style="left:597px;top:1887px;" width="9" height="9" viewBox="0 0 9 9"><path d="M9 0 L9 9 L0 9 Z" fill="#bdbdbd"/></svg>
<div class="a" style="left:714px;top:1858px;width:198px;height:44px;background:#252525"></div>
<div class="a" style="left:914px;top:1860px;width:32px;height:40px;background:#262626"></div>
<svg class="a" style="left:923px;top:1876px;" width="14" height="10" viewBox="0 0 14 10"><path d="M0 1 L14 1 L7 9 Z" fill="#8a8a8a"/></svg>
<div class="t" style="left:721px;top:1869px;font-size:21px;color:#5e5e5e;font-weight:normal;">sRGB</div>
<div class="t" style="left:954px;top:1868px;font-size:20px;color:#c2c2c2;font-weight:normal;">Hat_CastShadow-1</div>
<div class="t" style="left:1203px;top:1868px;font-size:20px;color:#c2c2c2;font-weight:normal;">Transforr</div>
<div class="t" style="left:1305px;top:1868px;font-size:20px;color:#c2c2c2;font-weight:normal;">Fı</div>
<div class="t" style="left:1521px;top:1868px;font-size:20px;color:#c2c2c2;font-weight:normal;">Black</div>
<div class="a" style="left:1575px;top:1862px;width:33px;height:33px;background:#000;border:2px solid #2a2a2a;box-sizing:border-box"></div>
<svg class="a" style="left:2px;top:72px;" width="1618" height="894" viewBox="0 0 1618 894"><defs>
<filter id="blur1" x="-20%" y="-20%" width="140%" height="140%"><feGaussianBlur stdDeviation="3.2"/></filter>
<radialGradient id="earg1" cx="910" cy="360" r="290" gradientUnits="userSpaceOnUse">
<stop offset="0" stop-color="#ddc4a0"/><stop offset="0.55" stop-color="#dcc39f"/><stop offset="0.74" stop-color="#d3b38d"/><stop offset="0.87" stop-color="#c69d7a"/><stop offset="1" stop-color="#c29676"/></radialGradient>
<radialGradient id="crg1" cx="735" cy="318" r="175" gradientUnits="userSpaceOnUse"><stop offset="0" stop-color="#947a57"/><stop offset="0.35" stop-color="#9b8060"/><stop offset="0.7" stop-color="#b69d7c"/><stop offset="1" stop-color="#dac19d"/></radialGradient>
<mask id="crm1"><rect x="0" y="0" width="1618" height="894" fill="#000"/><circle cx="815" cy="373" r="92" fill="#fff"/><circle cx="911" cy="432" r="100" fill="#000"/></mask>
</defs>
<g transform="translate(-2 -72)" filter="url(#blur1)">
<ellipse cx="807" cy="378" rx="183" ry="197" fill="url(#earg1)" transform="rotate(5 807 378)"/>
<rect x="700" y="270" width="220" height="210" fill="url(#crg1)" mask="url(#crm1)"/>
</g></svg>
<svg class="a" style="left:2px;top:1166px;" width="1618" height="686" viewBox="0 0 1618 686"><defs>
<radialGradient id="earg2" cx="920" cy="1450" r="380" gradientUnits="userSpaceOnUse">
<stop offset="0" stop-color="#e0c5a2"/><stop offset="0.55" stop-color="#dfc4a0"/><stop offset="0.7" stop-color="#d9bb96"/><stop offset="0.83" stop-color="#caa380"/><stop offset="0.92" stop-color="#c29878"/><stop offset="1" stop-color="#c49b7b"/></radialGradient>
<mask id="crm2"><rect x="0" y="1166" width="1618" height="686" fill="#000"/><circle cx="780" cy="1477" r="108" fill="#fff"/><circle cx="872" cy="1592" r="187" fill="#000"/></mask>
</defs>
<g transform="translate(-2 -1166)">
<path d="M777 1243 C918 1243 1011 1355 1011 1496 C1011 1640 920 1742 786 1742 C650 1742 546 1630 546 1490 C546 1350 640 1243 777 1243 Z" fill="url(#earg2)"/>
<rect x="660" y="1360" width="240" height="220" fill="#e4cfb0" mask="url(#crm2)"/>
</g></svg>
<div class="a" style="left:1628px;top:0px;width:1724px;height:1916px;background:linear-gradient(#464646,#424242)"></div>
<svg class="a" style="left:1644px;top:22px;" width="27" height="29" viewBox="0 0 27 29"><rect x="0" y="0" width="20" height="3.5" fill="#d2d2d2"/><rect x="0" y="8" width="20" height="3.5" fill="#d2d2d2"/><rect x="0" y="16.5" width="20" height="3.5" fill="#d2d2d2"/><path d="M26 20 L26 28 L18 28 Z" fill="#d2d2d2"/></svg>
<svg class="a" style="left:1690px;top:13px;" width="44" height="41" viewBox="0 0 44 41"><defs><linearGradient id="hg1690_13" x1="0" x2="1"><stop offset="0" stop-color="#fde3bd"/><stop offset="1" stop-color="#f2a550"/></linearGradient></defs>
<path d="M9 18 L9 39 L36 39 L36 18 L22.5 7 Z" fill="url(#hg1690_13)" stroke="#e7902e" stroke-width="2.5"/>
<path d="M2 21 L22.5 3 L43 21" fill="none" stroke="#9a6228" stroke-width="5" stroke-linejoin="miter"/>
<rect x="14.5" y="23" width="9" height="16" rx="2" fill="#9c6228"/>
<rect x="28" y="24" width="5" height="5" fill="#9c6228"/></svg>
<div class="t" style="left:1735px;top:23px;font-size:22px;color:#dedede;font-weight:normal;letter-spacing:1.2px">Top</div>
<div class="a" style="left:2980px;top:10px;width:150px;height:44px;background:linear-gradient(#545454,#4a4a4a);border:2px solid #5a5a5a;border-bottom:none;border-radius:5px 5px 0 0;box-sizing:border-box"></div>
<div class="t" style="left:2998px;top:22px;font-size:24px;color:#c4c4c4;font-weight:normal;">Node View</div>
<div class="a" style="left:3129px;top:4px;width:149px;height:50px;background:linear-gradient(#585858,#3a3a3a);border:2px solid #5c5c5c;border-bottom:none;border-radius:5px 5px 0 0;box-sizing:border-box"></div>
<div class="t" style="left:3146px;top:17px;font-size:24px;color:#e2e2e2;font-weight:normal;">Node View</div>
<svg class="a" style="left:3286px;top:16px;" width="56" height="24" viewBox="0 0 56 24"><rect x="0" y="8" width="22" height="6" fill="#c8c8c8"/><rect x="8" y="0" width="6" height="22" fill="#c8c8c8"/>
<rect x="29" y="-1" width="1.5" height="23" fill="#bbbbbb"/>
<path d="M36 2 L54 20 M54 2 L36 20" stroke="#c0c0c0" stroke-width="6"/></svg>
<div class="a" style="left:1634px;top:72px;width:1717px;height:1788px;background:#e6e6e6"></div>
<div class="a" style="left:1638px;top:76px;width:1707px;height:1784px;background:linear-gradient(90deg,#474747,#4a4a4a 50%,#474747)"></div>
<div class="t" style="left:1645px;top:1874px;font-size:23px;color:#bdbdbd;font-weight:normal;letter-spacing:0.8px">Top</div>
<div class="t" style="left:1703px;top:1874px;font-size:23px;color:#bdbdbd;font-weight:normal;">&gt;</div>
<div class="t" style="left:1732px;top:1874px;font-size:23px;color:#bdbdbd;font-weight:normal;letter-spacing:0.9px">group</div>
<div class="a" style="left:2951px;top:1867px;width:317px;height:45px;background:#131313;border-top:2px solid #3e3e3e;border-left:2px solid #3e3e3e;box-sizing:border-box"></div>
<svg class="a" style="left:3226px;top:1872px;" width="34" height="34" viewBox="0 0 34 34"><circle cx="12" cy="12" r="8.5" fill="none" stroke="#c8c8c8" stroke-width="3"/><path d="M18 18 L28 28" stroke="#c8c8c8" stroke-width="4.5" stroke-linecap="round"/></svg>
<div class="a" style="left:3274px;top:1870px;width:36px;height:34px;background:#444;border:2px solid #3a3a3a;border-right-color:#2e2e2e;border-bottom-color:#2e2e2e;box-sizing:border-box"></div>
<div class="a" style="left:3314px;top:1870px;width:36px;height:34px;background:#444;border:2px solid #3a3a3a;border-right-color:#2e2e2e;border-bottom-color:#2e2e2e;box-sizing:border-box"></div>
<svg class="a" style="left:3283px;top:1878px;" width="18" height="18" viewBox="0 0 18 18"><path d="M16 1 L16 17 L2 9 Z" fill="#3c3c3c"/></svg>
<svg class="a" style="left:3323px;top:1878px;" width="18" height="18" viewBox="0 0 18 18"><path d="M2 1 L2 17 L16 9 Z" fill="#3c3c3c"/></svg>
<div class="a" style="left:1628px;top:0px;width:1724px;height:2px;background:#f00"></div>
<div class="a" style="left:1628px;top:0px;width:4px;height:1916px;background:#f00"></div>
<div class="a" style="left:1628px;top:1913px;width:1724px;height:3px;background:#f00"></div>
<div class="a" style="left:3351px;top:0px;width:1px;height:1916px;background:#f00"></div>
<svg class="a" style="left:1638px;top:76px" width="1707" height="1784" viewBox="1638 76 1707 1784"><rect x="1735" y="238" width="1514" height="1527" rx="12" fill="#303030"/><rect x="1753" y="322" width="1477" height="1424" rx="11" fill="#393939"/><rect x="1758" y="264" width="42" height="45" fill="#000"/><rect x="1755" y="261.5" width="38" height="41" rx="2" fill="#ffe64d" stroke="#a8952a" stroke-width="4"/><text x="2492" y="296" font-family="Liberation Sans" font-weight="bold" font-size="39" fill="#ffffff" text-anchor="middle">R Ear</text><path d="M2496 116 L2516 140 L2476 140 Z" fill="#000"/><path d="M2492 112 L2512 136 L2472 136 Z" fill="#c2dff6"/><path d="M1638 1077 Q2490 1071 3345 1066" fill="none" stroke="#3db0e0" stroke-width="7" stroke-dasharray="24 15" stroke-dashoffset="10"/><path d="M1638 1449 L3345 1432" fill="none" stroke="#3db0e0" stroke-width="7" stroke-dasharray="24 15" stroke-dashoffset="36"/><path d="M1638 1608.5 L3345 1587" fill="none" stroke="#3db0e0" stroke-width="7"/><path d="M2689 1603 Q3010 1613 3345 1602" fill="none" stroke="#3db0e0" stroke-width="7" stroke-dasharray="24 15" stroke-dashoffset="12"/><clipPath id="w14c"><rect x="1638" y="1614" width="1707" height="300"/></clipPath><path d="M2685 1582 C2685 1738 2849 1795 2995 1862 L3040 1883" fill="none" stroke="#2d3f58" stroke-width="7" transform="translate(-4 2)" clip-path="url(#w14c)"/><path d="M2685 1582 C2685 1738 2849 1795 2995 1862 L3040 1883" fill="none" stroke="#3db0e0" stroke-width="7"/><path d="M2460 0 C2760 97 2916 291 2916 486" fill="none" stroke="#7dc71f" stroke-width="7"/><path d="M2916 566 C2916 615.0 2531 615.0 2531 664" fill="none" stroke="#7dc71f" stroke-width="7"/><path d="M2916 566 L2916 863" fill="none" stroke="#7dc71f" stroke-width="7"/><path d="M2531 746 C2531 804.5 2111 804.5 2111 863" fill="none" stroke="#7dc71f" stroke-width="7"/><path d="M2531 746 L2531 863" fill="none" stroke="#7dc71f" stroke-width="7"/><path d="M2111 945 L2111 1026" fill="none" stroke="#7dc71f" stroke-width="7"/><path d="M2531 945 L2531 1026" fill="none" stroke="#7dc71f" stroke-width="7"/><path d="M2916 945 L2916 1026" fill="none" stroke="#7dc71f" stroke-width="7"/><path d="M2111 1108 L2111 1121" fill="none" stroke="#3db0e0" stroke-width="7"/><path d="M2111 1202 C2111 1239.5 2394 1239.5 2394 1277" fill="none" stroke="#3db0e0" stroke-width="7"/><path d="M2531 1112 C2531 1204.4 2274 1184.6 2274 1277" fill="none" stroke="#3db0e0" stroke-width="7" stroke-dasharray="24 15"/><path d="M2274 1262 L2274 1277" fill="none" stroke="#3db0e0" stroke-width="7"/><path d="M2294 1236 L2279 1254" fill="none" stroke="#3db0e0" stroke-width="6"/><path d="M2394 1359 C2394 1429.0 2622 1429.0 2622 1499" fill="none" stroke="#3db0e0" stroke-width="7"/><path d="M2916 1108 C2916 1319.1 2743 1287.9 2743 1499" fill="none" stroke="#3db0e0" stroke-width="7"/><rect x="2805" y="509" width="246" height="52" fill="#000"/><rect x="2796" y="500" width="245" height="52" rx="2" fill="#8cbf56" stroke="#566b34" stroke-width="4"/><rect x="2811" y="515" width="27" height="27" fill="#000"/><rect x="2806" y="510" width="26" height="26" rx="1.5" fill="#ffe64c" stroke="#a8911f" stroke-width="4"/><text x="2875" y="540.5" font-family="Liberation Sans" font-size="33" fill="#000" textLength="128.9" lengthAdjust="spacing">Peg_3-P</text><rect x="2903" y="487" width="26" height="19.5" rx="2" fill="#7cc71f" stroke="#4b6a2a" stroke-width="4"/><rect x="2903" y="546" width="26" height="19.5" rx="2" fill="#7cc71f" stroke="#4b6a2a" stroke-width="4"/><rect x="2436" y="688" width="209" height="53" fill="#000"/><rect x="2427" y="679" width="208" height="53" rx="2" fill="#8cbf56" stroke="#566b34" stroke-width="4"/><rect x="2442" y="694" width="27" height="27" fill="#000"/><rect x="2437" y="689" width="26" height="26" rx="1.5" fill="#ffe64c" stroke="#a8911f" stroke-width="4"/><text x="2506" y="719.5" font-family="Liberation Sans" font-size="33" fill="#000" textLength="90.0" lengthAdjust="spacing">Peg_3</text><rect x="2518" y="666" width="26" height="19.5" rx="2" fill="#7cc71f" stroke="#4b6a2a" stroke-width="4"/><rect x="2518" y="726" width="26" height="19.5" rx="2" fill="#7cc71f" stroke="#4b6a2a" stroke-width="4"/><rect x="1973" y="887" width="298" height="52" fill="#000"/><rect x="1964" y="878" width="297" height="52" rx="2" fill="#8cbf56" stroke="#566b34" stroke-width="4"/><rect x="1979" y="893" width="27" height="27" fill="#000"/><rect x="1974" y="888" width="26" height="26" rx="1.5" fill="#ffe64c" stroke="#a8911f" stroke-width="4"/><text x="2042.5" y="918.5" font-family="Liberation Sans" font-size="33" fill="#000" textLength="179.75" lengthAdjust="spacing">EarInside-P</text><rect x="2098" y="865" width="26" height="19.5" rx="2" fill="#7cc71f" stroke="#4b6a2a" stroke-width="4"/><rect x="2098" y="924" width="26" height="19.5" rx="2" fill="#7cc71f" stroke="#4b6a2a" stroke-width="4"/><rect x="2390" y="887" width="301" height="52" fill="#000"/><rect x="2381" y="878" width="300" height="52" rx="2" fill="#8cbf56" stroke="#566b34" stroke-width="4"/><rect x="2396" y="893" width="27" height="27" fill="#000"/><rect x="2391" y="888" width="26" height="26" rx="1.5" fill="#ffe64c" stroke="#a8911f" stroke-width="4"/><text x="2460" y="918.5" font-family="Liberation Sans" font-size="33" fill="#000" textLength="184.5" lengthAdjust="spacing">EarCutter-P</text><rect x="2518" y="865" width="26" height="19.5" rx="2" fill="#7cc71f" stroke="#4b6a2a" stroke-width="4"/><rect x="2518" y="924" width="26" height="19.5" rx="2" fill="#7cc71f" stroke="#4b6a2a" stroke-width="4"/><rect x="2824" y="887" width="203" height="52" fill="#000"/><rect x="2815" y="878" width="202" height="52" rx="2" fill="#8cbf56" stroke="#566b34" stroke-width="4"/><rect x="2830" y="893" width="27" height="27" fill="#000"/><rect x="2825" y="888" width="26" height="26" rx="1.5" fill="#ffe64c" stroke="#a8911f" stroke-width="4"/><text x="2894" y="918.5" font-family="Liberation Sans" font-size="33" fill="#000" textLength="85.25" lengthAdjust="spacing">Ear-P</text><rect x="2903" y="865" width="26" height="19.5" rx="2" fill="#7cc71f" stroke="#4b6a2a" stroke-width="4"/><rect x="2903" y="924" width="26" height="19.5" rx="2" fill="#7cc71f" stroke="#4b6a2a" stroke-width="4"/><rect x="1927" y="1050" width="385" height="52" fill="#000"/><rect x="1918" y="1041" width="384" height="52" rx="2" fill="#789fcb" stroke="#33486d" stroke-width="4"/><rect x="1933" y="1056" width="27" height="27" fill="#000"/><rect x="1928" y="1051" width="26" height="26" rx="1.5" fill="#ffe64c" stroke="#a8911f" stroke-width="4"/><path d="M1976 1053 L2003 1067 L1976 1081 Z" fill="#2e4670"/><text x="2036" y="1081.5" font-family="Liberation Sans" font-size="33" fill="#000" textLength="140.5" lengthAdjust="spacing">EarInside</text><text x="2200" y="1081.5" font-family="Liberation Sans" font-size="33" fill="#000" textLength="68.0" lengthAdjust="spacing">[tvg]</text><rect x="2098" y="1028" width="26" height="19.5" rx="2" fill="#7cc71f" stroke="#4b6a2a" stroke-width="4"/><rect x="2107" y="1033.5" width="8" height="8" fill="#4b6a2a"/><rect x="2098" y="1087" width="26" height="19.5" rx="2" fill="#3daee0" stroke="#2d4868" stroke-width="4"/><rect x="2345" y="1050" width="392" height="52" fill="#000"/><rect x="2336" y="1041" width="391" height="52" rx="2" fill="#789fcb" stroke="#33486d" stroke-width="4"/><rect x="2351" y="1056" width="27" height="27" fill="#000"/><rect x="2346" y="1051" width="26" height="26" rx="1.5" fill="#ffe64c" stroke="#a8911f" stroke-width="4"/><path d="M2394 1053 L2421 1067 L2394 1081 Z" fill="#2e4670"/><text x="2453" y="1081.5" font-family="Liberation Sans" font-size="33" fill="#000" textLength="146.25" lengthAdjust="spacing">EarCutter</text><text x="2621.5" y="1081.5" font-family="Liberation Sans" font-size="33" fill="#000" textLength="67.75" lengthAdjust="spacing">[tvg]</text><rect x="2518" y="1028" width="26" height="19.5" rx="2" fill="#7cc71f" stroke="#4b6a2a" stroke-width="4"/><rect x="2527" y="1033.5" width="8" height="8" fill="#4b6a2a"/><rect x="2518" y="1087" width="26" height="19.5" rx="2" fill="#3daee0" stroke="#2d4868" stroke-width="4"/><rect x="2782" y="1050" width="291" height="52" fill="#000"/><rect x="2773" y="1041" width="290" height="52" rx="2" fill="#789fcb" stroke="#33486d" stroke-width="4"/><rect x="2788" y="1056" width="27" height="27" fill="#000"/><rect x="2783" y="1051" width="26" height="26" rx="1.5" fill="#ffe64c" stroke="#a8911f" stroke-width="4"/><path d="M2831 1053 L2858 1067 L2831 1081 Z" fill="#2e4670"/><text x="2891" y="1081.5" font-family="Liberation Sans" font-size="33" fill="#000" textLength="47.5" lengthAdjust="spacing">Ear</text><text x="2961.5" y="1081.5" font-family="Liberation Sans" font-size="33" fill="#000" textLength="66.5" lengthAdjust="spacing">[tvg]</text><rect x="2903" y="1028" width="26" height="19.5" rx="2" fill="#7cc71f" stroke="#4b6a2a" stroke-width="4"/><rect x="2912" y="1033.5" width="8" height="8" fill="#4b6a2a"/><rect x="2903" y="1087" width="26" height="19.5" rx="2" fill="#3daee0" stroke="#2d4868" stroke-width="4"/><rect x="1963" y="1145" width="317" height="52" fill="#000"/><rect x="1954" y="1136" width="316" height="52" rx="2" fill="#4a7bbf" stroke="#3a4a8a" stroke-width="4"/><rect x="1969" y="1151" width="27" height="27" fill="#000"/><rect x="1964" y="1146" width="26" height="26" rx="1.5" fill="#ffe64c" stroke="#a8911f" stroke-width="4"/><path d="M2012 1148 L2039 1162 L2012 1176 Z" fill="#3a4690"/><text x="2074" y="1176.5" font-family="Liberation Sans" font-size="33" fill="#000" textLength="156.5" lengthAdjust="spacing">Shadow_1</text><rect x="2098" y="1123" width="26" height="19.5" rx="2" fill="#3daee0" stroke="#2d4868" stroke-width="4"/><rect x="2098" y="1182" width="26" height="19.5" rx="2" fill="#3daee0" stroke="#2d4868" stroke-width="4"/><rect x="2257" y="1302" width="295" height="52" fill="#000"/><rect x="2248" y="1293" width="294" height="52" rx="2" fill="#4a7bbf" stroke="#3a4a8a" stroke-width="4"/><rect x="2250" y="1295" width="48" height="48" fill="#fff"/><path d="M2254 1315 C2262 1305 2286 1305 2294 1315 C2292 1325 2282 1329 2275 1323 L2273 1323 C2266 1329 2256 1325 2254 1315 Z" fill="#000"/><ellipse cx="2264" cy="1317" rx="5" ry="3.5" fill="#fff"/><ellipse cx="2284" cy="1317" rx="5" ry="3.5" fill="#fff"/><rect x="2315" y="1308" width="27" height="27" fill="#000"/><rect x="2310" y="1303" width="26" height="26" rx="1.5" fill="#ffe64c" stroke="#a8911f" stroke-width="4"/><path d="M2358 1305 L2385 1319 L2358 1333 Z" fill="#3a4690"/><text x="2394" y="1333.5" font-family="Liberation Sans" font-size="33" fill="#000" textLength="133.25" lengthAdjust="spacing">Cutter_1</text><rect x="2261" y="1280" width="26" height="19.5" rx="2" fill="#ffffff" stroke="#000000" stroke-width="4"/><rect x="2381" y="1280" width="26" height="19.5" rx="2" fill="#3daee0" stroke="#2d4868" stroke-width="4"/><rect x="2390" y="1285.5" width="8" height="8" fill="#2d4868"/><rect x="2381" y="1339" width="26" height="19.5" rx="2" fill="#3daee0" stroke="#2d4868" stroke-width="4"/><rect x="2511" y="1523" width="366" height="52" fill="#000"/><rect x="2502" y="1514" width="365" height="52" rx="2" fill="#4a7bbf" stroke="#3a4a8a" stroke-width="4"/><rect x="2517" y="1529" width="27" height="27" fill="#000"/><rect x="2512" y="1524" width="26" height="26" rx="1.5" fill="#ffe64c" stroke="#a8911f" stroke-width="4"/><path d="M2560 1526 L2587 1540 L2560 1554 Z" fill="#3a4690"/><text x="2622" y="1554.5" font-family="Liberation Sans" font-size="33" fill="#000" textLength="204.5" lengthAdjust="spacing">Composite_2</text><rect x="2609" y="1501" width="26" height="19.5" rx="2" fill="#4ee8e8" stroke="#2b7a80" stroke-width="4"/><rect x="2730" y="1501" width="26" height="19.5" rx="2" fill="#3daee0" stroke="#2d4868" stroke-width="4"/><rect x="2739" y="1506.5" width="8" height="8" fill="#2d4868"/><rect x="2672" y="1560" width="26" height="19.5" rx="2" fill="#3daee0" stroke="#2d4868" stroke-width="4"/></svg>
<svg class="a" style="left:3145px;top:1656px;" width="197" height="196" viewBox="0 0 197 196"><rect x="0" y="0" width="197" height="196" fill="#787878"/><rect x="11" y="72" width="112" height="35" fill="#3c3c3c"/><rect x="11" y="85" width="112" height="13" fill="#474747"/><rect x="32" y="86" width="70" height="13" rx="2" fill="#3f3f3f"/><rect x="127" y="79" width="60" height="23" fill="#3c3c3c"/><rect x="127" y="88" width="60" height="9" fill="#474747"/><path d="M108.7 60 C100 66 80 66 72 75 C65 82 40 84 22 92 M72 75 C90 78 120 80 146 85 M108.7 60 C125 68 140 72 146 80 C150 86 150 90 152 94" fill="none" stroke="#84cc1a" stroke-width="1"/><path d="M66 79 C60 84 50 88 45 93 M66 79 C75 82 85 86 92 94 M66 79 C95 80 130 86 150 89 C165 90 180 90 187 93" fill="none" stroke="#84cc1a" stroke-width="1"/><path d="M70 85 C55 86 40 90 35 95 M60 85 C70 88 75 92 78 95 M100 84 C110 86 118 90 120 95 M138 86 C142 88 145 92 145 95 M158 88 C165 90 175 92 185 95 M40 90 C45 88 55 87 62 92" fill="none" stroke="#84cc1a" stroke-width="1"/><path d="M11 95.5 L187 95.5" stroke="#d8c030" stroke-width="1.4" stroke-dasharray="1.5 2"/><path d="M11 98 L123 98 M127 97 L187 97" stroke="#3aa8e0" stroke-width="2"/><path d="M106 118.6 C95 110 80 106 66 103.7 C50 101 30 99 14 97" fill="none" stroke="#3aa8e0" stroke-width="1.1"/><path d="M106 118.6 C108 110 112 104 117.5 97" fill="none" stroke="#3aa8e0" stroke-width="1.1"/><path d="M106 118.6 C115 108 125 102 136 96" fill="none" stroke="#3aa8e0" stroke-width="1.1"/><path d="M106 118.6 C120 108 138 102 150 96" fill="none" stroke="#3aa8e0" stroke-width="1.1"/><path d="M106 118.6 C125 110 150 104 166 96" fill="none" stroke="#3aa8e0" stroke-width="1.1"/><path d="M106 118.6 C130 112 165 106 181 95" fill="none" stroke="#3aa8e0" stroke-width="1.1"/><path d="M20 100 C40 104 70 106 90 103" fill="none" stroke="#3aa8e0" stroke-width="1.1"/><path d="M30 102 C60 106 85 108 104 104" fill="none" stroke="#3aa8e0" stroke-width="1.1"/><path d="M106 118.6 L108 134" fill="none" stroke="#3aa8e0" stroke-width="1.1"/><rect x="80.4" y="88.4" width="8" height="8.4" fill="#000"/><rect x="83" y="91" width="3" height="2.5" fill="#3ce0e0"/><circle cx="108.7" cy="59" r="1.5" fill="#e8e8c0"/><path d="M103 133 L113 133" stroke="#3aa8e0" stroke-width="1.5"/><circle cx="111.5" cy="132.5" r="1.1" fill="#f22"/></svg>
</body></html>
